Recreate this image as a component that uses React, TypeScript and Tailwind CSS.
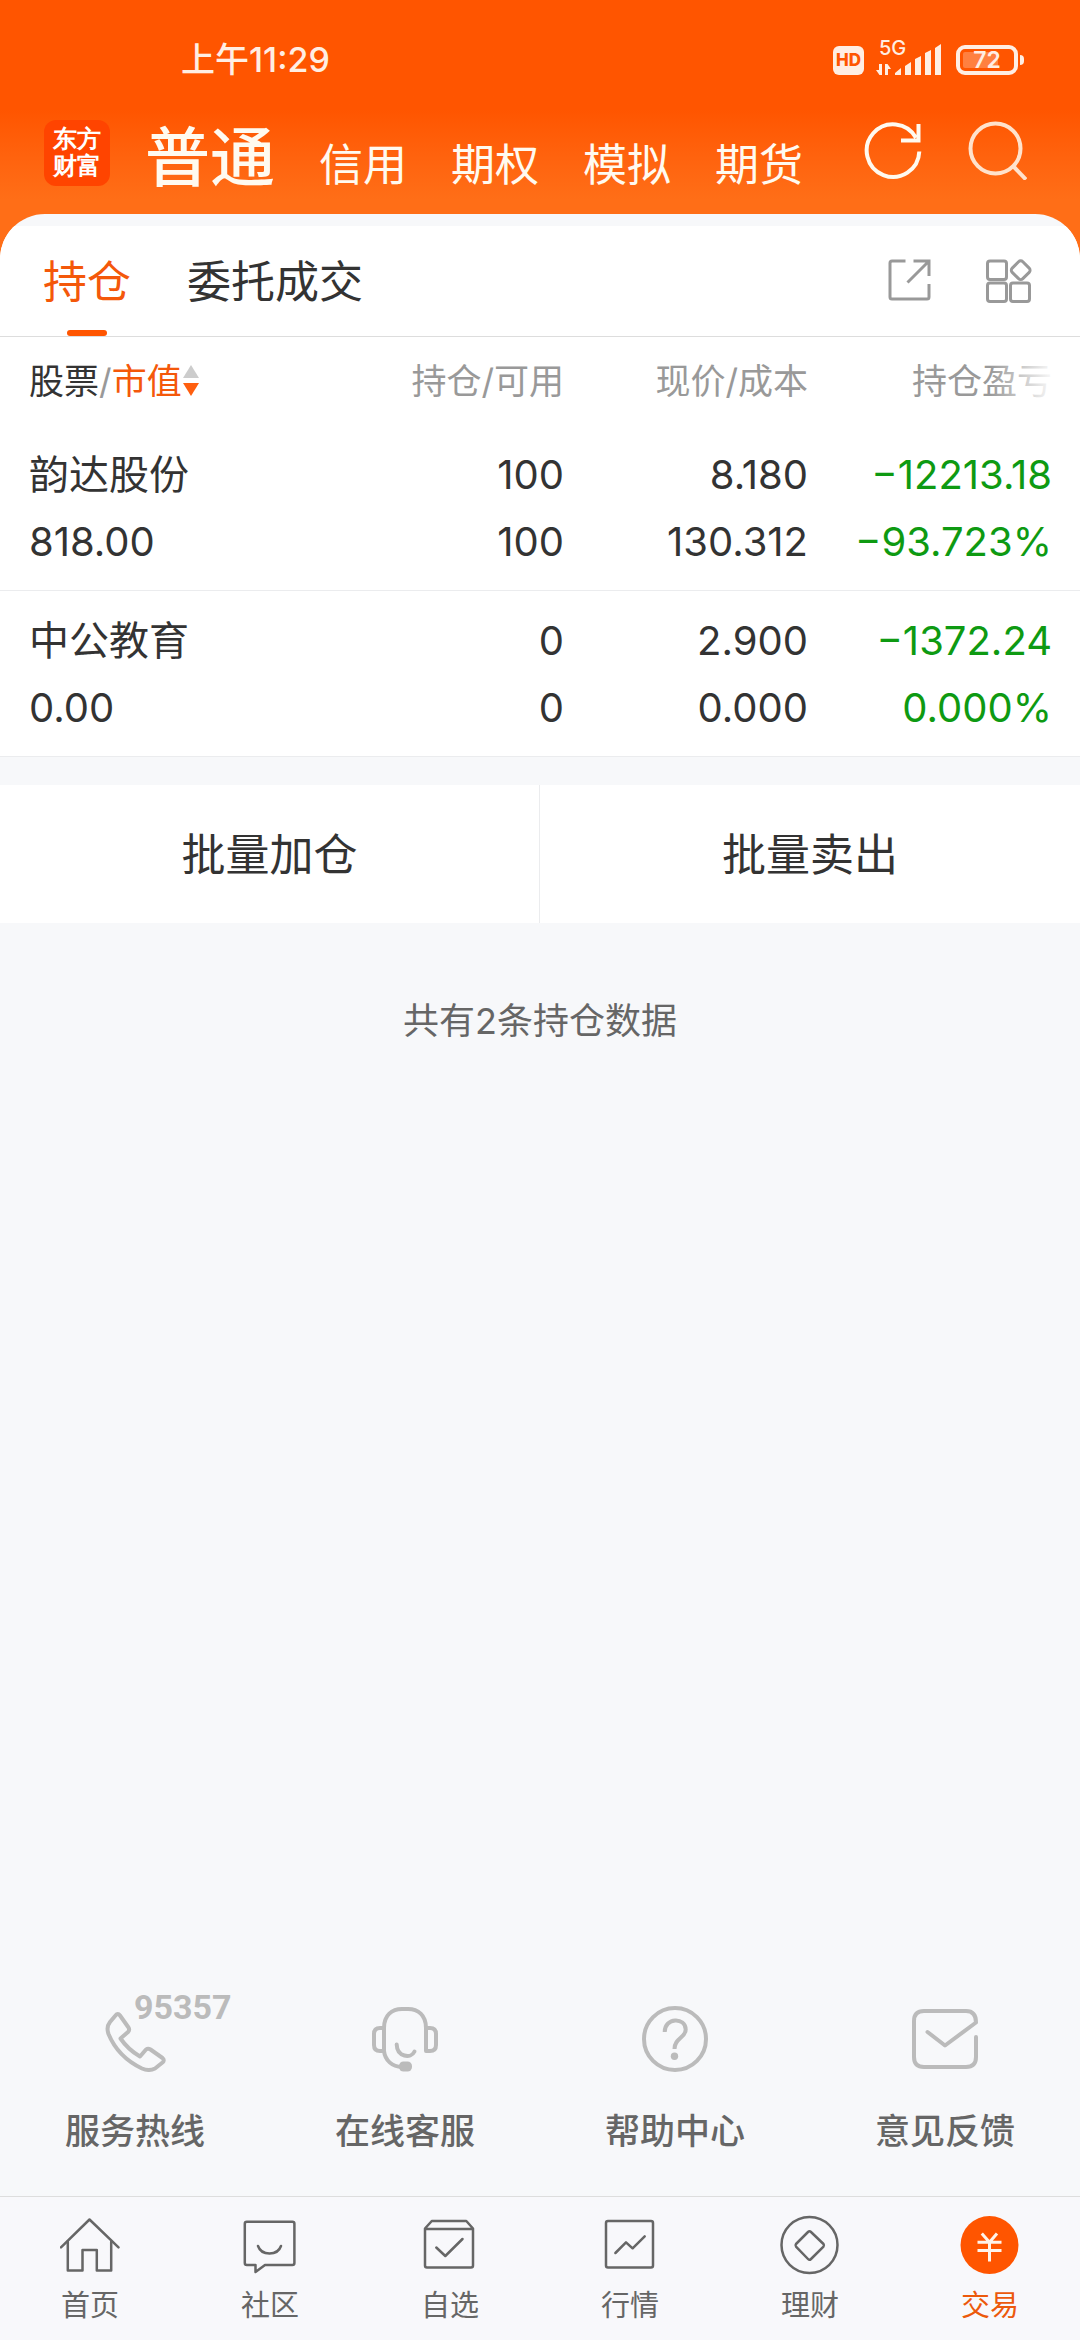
import { useState } from "react";
import type { ReactNode } from "react";

interface Holding {
    name: string;
    marketValue: string;
    amount: string;
    available: string;
    price: string;
    cost: string;
    profit: string;
    profitRate: string;
}

const accounts = ["普通", "信用", "期权", "模拟", "期货"];
const tabs = ["持仓", "委托成交"];

const holdings: Holding[] = [
    {
        name: "韵达股份",
        marketValue: "818.00",
        amount: "100",
        available: "100",
        price: "8.180",
        cost: "130.312",
        profit: "−12213.18",
        profitRate: "−93.723%",
    },
    {
        name: "中公教育",
        marketValue: "0.00",
        amount: "0",
        available: "0",
        price: "2.900",
        cost: "0.000",
        profit: "−1372.24",
        profitRate: "0.000%",
    },
];

const services: { label: string; badge?: string; icon: ReactNode }[] = [
    {
        label: "服务热线",
        badge: "95357",
        icon: (
            <path d="M13.5 9.5Q15.8 6.5 18 9.5L26.5 21.5Q28 24 26 26L18.5 32.5Q26 43.5 38 50.5L44 43.5Q46 42 48.5 43.5L60.5 52Q63 54 60.5 56.5L53 62.5Q47 65.5 40 62.5Q16 51 6.5 28Q4 21 8 16Z" />
        ),
    },
    {
        label: "在线客服",
        icon: (
            <>
                <path d="M12 44V22C12 9 20 3 30 3H36C46 3 54 9 54 22V45H58Q64 45 64 39V28Q64 22 58 22H54" />
                <path d="M12 22H8Q2 22 2 28V39Q2 45 8 45H12C13 54 20 61 30 61" />
                <path d="M24.7 38.5C25 51 39 53 42.5 45.5" />
                <rect x="27" y="55.5" width="13" height="10" rx="4.5" fill="currentColor" stroke="none" />
            </>
        ),
    },
    {
        label: "帮助中心",
        icon: (
            <>
                <circle cx="33" cy="33" r="31" />
                <path d="M22.7 26C22.7 11 43.7 11 43.7 23.5C43.7 32 32.5 32 32.5 43" strokeLinecap="butt" />
                <circle cx="32.5" cy="50.3" r="3.7" fill="currentColor" stroke="none" />
            </>
        ),
    },
    {
        label: "意见反馈",
        icon: <path d="M64 31V51Q64 61 54 61H12Q2 61 2 51V15Q2 5 12 5H54Q64 5 64 16.5L33 39.5L15.5 26" />,
    },
];

const navItems: { label: string; icon: ReactNode }[] = [
    {
        label: "首页",
        icon: (
            <>
                <path d="M1 32.3L29.5 4.5L58.5 32.3" />
                <path d="M7.8 26.5V55.5H22.5V35H36.8V55.5H51.2V26.5" />
            </>
        ),
    },
    {
        label: "社区",
        icon: (
            <>
                <path d="M6.8 6.7H52.4Q54.4 6.7 54.4 8.7V48Q54.4 50 52.4 50H25L15.5 57V50H6.8Q4.8 50 4.8 48V8.7Q4.8 6.7 6.8 6.7Z" />
                <path d="M18 31C21.5 41 37.5 41 41 31" />
            </>
        ),
    },
    {
        label: "自选",
        icon: (
            <>
                <path d="M5 13.5L11.8 6H46.3L53 13.5V50.5Q53 52.5 51 52.5H7Q5 52.5 5 50.5ZM5 14H53" />
                <path d="M16.3 32.5L25.3 41L42.5 24" />
            </>
        ),
    },
    {
        label: "行情",
        icon: (
            <>
                <rect x="6" y="6" width="47" height="46.5" rx="2" />
                <path d="M15.4 38L26 27.3L32.6 33.3L44.7 21.3" />
            </>
        ),
    },
    {
        label: "理财",
        icon: (
            <>
                <circle cx="29.5" cy="30" r="28" />
                <path d="M28 17L16 29Q15 30.3 16 31.6L28 44Q29.5 45.5 31 44L43.5 31.6Q44.5 30.3 43.5 29L31 17Q29.5 15.5 28 17Z" />
            </>
        ),
    },
    {
        label: "交易",
        icon: (
            <>
                <circle cx="29.5" cy="30" r="29" fill="#ff5500" stroke="none" />
                <path
                    d="M21.8 18.5L29.5 27.3L37 18.5M17.5 27.3H41.5M17.5 35.5H41.5M29.5 27.3V46.5"
                    stroke="#fff3ea"
                    strokeLinecap="butt"
                    strokeWidth="3"
                />
            </>
        ),
    },
];

function StatusBar() {
    return (
        <div className="flex h-[120px] items-center justify-between pl-[181px] pr-14 text-[#ffeee3]">
            <span className="text-[34px] font-medium leading-none">上午11:29</span>
            <div className="flex items-center">
                <span className="flex h-[29px] w-[31px] items-center justify-center rounded-md bg-[#ffeee3] text-[17px] font-extrabold leading-none text-[#ff5500]">
                    HD
                </span>
                <svg width="68" height="44" viewBox="0 -6 68 44" className="mb-[10px] ml-3" fill="currentColor">
                    <text x="3" y="16" fontSize="20" fontWeight="500">5G</text>
                    <path d="M6 25V36H3.500L0 31H3V25ZM9 36V25H11.500L15 30H12V36Z" />
                    <path d="M19 36V34L25 29V36ZM29 36V27L35 23V36ZM39 36V20L45 17V36ZM49 36V14L55 11V36ZM59 36V9L65 5V36Z" />
                </svg>
                <div className="ml-3 flex h-[30px] w-[62px] items-center justify-center rounded-[9px] border-4 border-[#ffeee3] bg-linear-to-r from-[#ff8040] from-70% to-[#ff5500] to-70% bg-clip-content p-[3px] text-[23px] font-semibold leading-none">
                    72
                </div>
                <span className="ml-[2px] h-[10px] w-1 rounded-r bg-[#ffeee3]" />
            </div>
        </div>
    );
}

export default function App() {
    const [account, setAccount] = useState("普通");
    const [tab, setTab] = useState("持仓");
    const [nav, setNav] = useState("交易");

    return (
        <div className="flex min-h-dvh flex-col bg-[#f7f8fa] font-['Inter','Noto_Sans_CJK_SC',sans-serif] text-[#333333]">
            <div className="bg-linear-to-b from-[#ff5500] from-[110px] to-[#ff6e17] to-[200px]">
                <StatusBar />

                {/* Account switcher */}
                <header className="flex h-[94px] items-start pl-11 pr-[53px] text-[#fffaf0]">
                    <div className="flex size-[66px] items-center justify-center rounded-xl bg-[#ff4400] text-center font-['Liberation_Serif',serif] text-[24px] font-black leading-[27px] text-white">
                        <span>
                            东方
                            <br />
                            财富
                        </span>
                    </div>
                    <nav className="ml-[35px] flex items-baseline gap-11 pt-[5px]">
                        {accounts.map((item) => (
                            <button
                                key={item}
                                onClick={() => setAccount(item)}
                                className={`leading-none ${item === account ? "text-[65px] font-medium" : "text-[44px]"}`}
                            >
                                {item}
                            </button>
                        ))}
                    </nav>
                    <div className="ml-auto flex gap-11">
                        <button aria-label="刷新">
                            <svg width="60" height="60" viewBox="0 0 60 60" fill="none" stroke="currentColor" strokeWidth="4">
                                <path d="M56.300 31.500A26.300 26.300 0 1 1 53 17.800M55.500 4V20.500H38" />
                            </svg>
                        </button>
                        <button aria-label="搜索" className="text-[#ffe2cc]">
                            <svg width="60" height="60" viewBox="0 0 60 60" fill="none" stroke="currentColor" strokeWidth="4">
                                <circle cx="28.500" cy="28.500" r="25" />
                                <path d="M46.500 46.500L59 59.500" />
                            </svg>
                        </button>
                    </div>
                </header>

                {/* Tabs */}
                <div className="overflow-hidden rounded-t-[45px] bg-[#f7f8fa] pt-3">
                    <div className="flex h-[111px] items-stretch border-b border-[#dddddd] bg-white pl-[43px] pr-12">
                        <div className="flex gap-14">
                            {tabs.map((item) => (
                                <button
                                    key={item}
                                    onClick={() => setTab(item)}
                                    className={`relative pt-[2px] text-[44px] leading-none ${item === tab ? "text-[#f4580a]" : ""}`}
                                >
                                    {item}
                                    {item === tab && (
                                        <span className="absolute bottom-0 left-1/2 h-[6px] w-10 -translate-x-1/2 rounded-full bg-[#ff5500]" />
                                    )}
                                </button>
                            ))}
                        </div>
                        <div className="ml-auto flex items-center gap-[50px] text-[#999999]">
                            <button aria-label="分享">
                                <svg width="48" height="48" viewBox="0 0 48 48" fill="none" stroke="currentColor" strokeWidth="3">
                                    <path d="M19.500 4H6Q4 4 4 6V40Q4 42 6 42H41Q43 42 43 40V27M27.500 4H43V19M43 4L21.500 25.500" />
                                </svg>
                            </button>
                            <button aria-label="更多">
                                <svg width="48" height="48" viewBox="0 0 48 48" fill="none" stroke="currentColor" strokeWidth="3">
                                    <rect x="3.500" y="4" width="19" height="18.500" rx="2.500" />
                                    <rect x="3.500" y="26" width="19" height="18.500" rx="2.500" />
                                    <rect x="26.500" y="26" width="19" height="18.500" rx="2.500" />
                                    <rect x="29.200" y="5.700" width="15" height="15" rx="3" transform="rotate(45 36.700 13.200)" />
                                </svg>
                            </button>
                        </div>
                    </div>
                </div>
            </div>

            {/* Holdings */}
            <table className="w-full table-fixed border-separate border-spacing-0 bg-white text-right">
                <thead>
                    <tr className="h-[88px] text-[35px] leading-none text-[#999999]">
                        <th className="p-0 pl-[29px] text-left font-normal">
                            <button className="flex items-center">
                                <span className="text-[#333333]">股票</span>
                                <span>/</span>
                                <span className="text-[#f4580a]">市值</span>
                                <svg width="16" height="32" viewBox="0 0 16 32" className="ml-px">
                                    <path d="M8 0L16 13H0Z" fill="#cccccc" />
                                    <path d="M0 18H16L8 31Z" fill="#ff5f0f" />
                                </svg>
                            </button>
                        </th>
                        <th className="w-[244px] p-0 font-normal">持仓/可用</th>
                        <th className="w-[244px] p-0 font-normal">现价/成本</th>
                        <th className="relative w-[272px] p-0 pr-[28px] font-normal">
                            持仓盈亏
                            <span className="absolute inset-y-0 right-0 w-[90px] bg-linear-to-l from-white from-[24px] to-transparent" />
                        </th>
                    </tr>
                </thead>
                <tbody className="text-[40px] leading-[67px]">
                    {holdings.map((h) => (
                        <tr key={h.name}>
                            <td className="border-b border-[#ebecee] p-0 pb-[15px] pl-[29px] pt-4 text-left">
                                <div>{h.name}</div>
                                <div>{h.marketValue}</div>
                            </td>
                            <td className="border-b border-[#ebecee] p-0 pb-[15px] pt-4">
                                <div>{h.amount}</div>
                                <div>{h.available}</div>
                            </td>
                            <td className="border-b border-[#ebecee] p-0 pb-[15px] pt-4">
                                <div>{h.price}</div>
                                <div>{h.cost}</div>
                            </td>
                            <td className="border-b border-[#ebecee] p-0 pb-[15px] pr-[28px] pt-4 text-[#0e9a12]">
                                <div>{h.profit}</div>
                                <div>{h.profitRate}</div>
                            </td>
                        </tr>
                    ))}
                </tbody>
            </table>

            {/* Batch actions */}
            <div className="mt-7 grid h-[138px] grid-cols-2 bg-white text-[44px] leading-none">
                <button className="border-r border-[#ebecee] pt-[2px]">批量加仓</button>
                <button className="pt-[2px]">批量卖出</button>
            </div>

            <p className="mt-20 text-center text-[36px] leading-9 text-[#666666]">共有2条持仓数据</p>

            {/* Services */}
            <div className="mt-auto grid grid-cols-4 pb-[47px]">
                {services.map((s) => (
                    <button key={s.label} className="flex flex-col items-center gap-[41px]">
                        <span className="relative text-[#bbbbbb]">
                            <svg
                                width="66"
                                height="66"
                                viewBox="0 0 66 66"
                                fill="none"
                                stroke="currentColor"
                                strokeWidth="4"
                                strokeLinecap="round"
                                strokeLinejoin="round"
                            >
                                {s.icon}
                            </svg>
                            {s.badge && (
                                <span className="absolute -top-4 left-8 font-['Roboto',sans-serif] text-[34px] font-bold leading-none">
                                    {s.badge}
                                </span>
                            )}
                        </span>
                        <span className="text-[35px] font-medium leading-9 text-[#666666]">{s.label}</span>
                    </button>
                ))}
            </div>

            {/* Bottom navigation */}
            <nav className="grid grid-cols-6 border-t border-[#dddddd] bg-[#f8f8fb] pb-5 pt-[18px]">
                {navItems.map((item) => (
                    <button
                        key={item.label}
                        onClick={() => setNav(item.label)}
                        className={`flex flex-col items-center gap-4 ${item.label === nav ? "text-[#ec590c]" : "text-[#666666]"}`}
                    >
                        <svg
                            width="60"
                            height="60"
                            viewBox="0 0 60 60"
                            fill="none"
                            stroke="currentColor"
                            strokeWidth="2.5"
                            strokeLinecap="round"
                            strokeLinejoin="round"
                        >
                            {item.icon}
                        </svg>
                        <span className="text-[29px] leading-none">{item.label}</span>
                    </button>
                ))}
            </nav>
        </div>
    );
}
